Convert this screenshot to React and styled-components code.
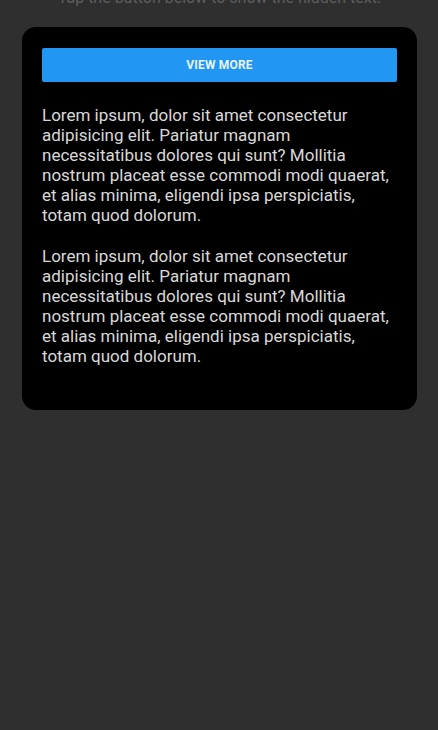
import styled, { createGlobalStyle } from "styled-components";

const GlobalStyle = createGlobalStyle`
  html, body {
    margin: 0;
    padding: 0;
    background: #2f2f2f;
    font-family: Roboto, "Noto Sans", "Liberation Sans", sans-serif;
  }
`;

const Page = styled.div`
  min-height: 730px;
  padding: 0 21px 0 22px;
  overflow: hidden;
`;

// previous line of the screen, mostly scrolled out of view
const Caption = styled.p`
  margin: -11px 0 0;
  font-size: 16px;
  line-height: 18px;
  color: #5e5e5e;
  text-align: center;
`;

const Card = styled.section`
  margin-top: 20px;
  background: #000;
  border-radius: 14px;
  padding: 21px 20px 44px;
`;

const Button = styled.button`
  display: block;
  width: 100%;
  height: 34px;
  border: 0;
  border-radius: 2px;
  background: #2196f3;
  color: #e8f3fc;
  font-family: inherit;
  font-size: 12px;
  font-weight: 700;
  letter-spacing: 0.2px;
  text-transform: uppercase;
  cursor: pointer;
`;

const Body = styled.div`
  margin-top: 23px;
  display: flex;
  flex-direction: column;
  gap: 21px;
`;

const Paragraph = styled.p`
  margin: 0;
  font-size: 17px;
  line-height: 20px;
  color: #d9d9d9;
`;

const LOREM =
  "Lorem ipsum, dolor sit amet consectetur adipisicing elit. Pariatur magnam necessitatibus dolores qui sunt? Mollitia nostrum placeat esse commodi modi quaerat, et alias minima, eligendi ipsa perspiciatis, totam quod dolorum.";

const App = () => (
  <>
    <GlobalStyle />
    <Page>
      <Caption>Tap the button below to show the hidden text.</Caption>
      <Card>
        <Button>View more</Button>
        <Body>
          <Paragraph>{LOREM}</Paragraph>
          <Paragraph>{LOREM}</Paragraph>
        </Body>
      </Card>
    </Page>
  </>
);

export default App;
